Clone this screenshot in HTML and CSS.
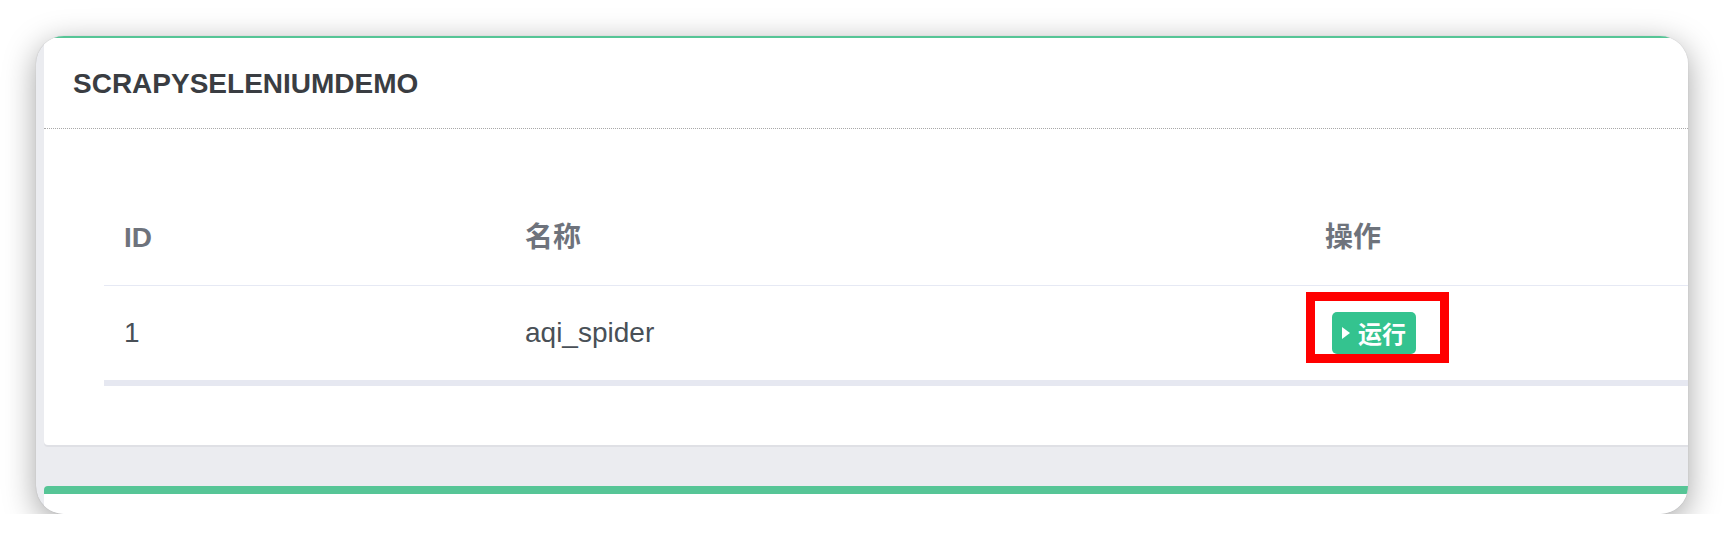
FILE: index.html
```html
<!DOCTYPE html>
<html lang="zh-CN">
<head>
<meta charset="utf-8">
<title>SCRAPYSELENIUMDEMO</title>
<link rel="stylesheet" href="styles.css">
</head>
<body>
<div class="window">
  <div class="topline"></div>
  <section class="card">
    <header class="card-head">
      <h4 class="card-title">SCRAPYSELENIUMDEMO</h4>
    </header>
    <div class="card-body">
      <table class="table">
        <colgroup>
          <col class="c-id">
          <col class="c-name">
          <col>
        </colgroup>
        <thead>
          <tr><th>ID</th><th>名称</th><th>操作</th></tr>
        </thead>
        <tbody>
          <tr>
            <td>1</td>
            <td>aqi_spider</td>
            <td class="ops">
              <span class="btn-run"><svg class="play" width="8" height="12" viewBox="0 0 8 12"><polygon points="0,0 8,6 0,12" fill="#ffffff"/></svg><span class="btn-text">运行</span></span>
              <span class="highlight"></span>
            </td>
          </tr>
        </tbody>
      </table>
    </div>
  </section>
  <section class="card next"></section>
</div>
</body>
</html>
```

FILE: styles.css
```css
* { box-sizing: border-box; }
html, body { margin: 0; background: #ffffff; }
body {
  padding: 36px 0 0 36px;
  font-family: "Liberation Sans", "Noto Sans CJK SC", sans-serif;
}
.window {
  width: 1652px;
  height: 478px;
  border-radius: 28px;
  overflow: hidden;
  background: #ebecf0;
  display: flex;
  flex-direction: column;
  box-shadow: 0 8px 32px rgba(0, 0, 0, 0.36), 0 0 1px rgba(0, 0, 0, 0.25);
}
.topline { flex: none; height: 2px; background: #56c596; }
.card {
  flex: none;
  background: #ffffff;
  margin-left: 8px;
  margin-right: -100px;
  border-radius: 0 0 0 4px;
  box-shadow: 0 2px 0 #dfe0e5;
}
.card-head {
  height: 91px;
  padding: 2px 30px 0 29px;
  display: flex;
  align-items: center;
  border-bottom: 1px dotted #a8a8a8;
}
.card-title {
  margin: 0;
  font-size: 28px;
  font-weight: bold;
  color: #3a3d42;
  line-height: 32px;
}
.card-body { padding: 62px 60px 59px 60px; }
.table {
  width: 100%;
  table-layout: fixed;
  border-collapse: separate;
  border-spacing: 0;
  font-size: 28px;
}
.c-id { width: 401px; }
.c-name { width: 800px; }
.table th {
  text-align: left;
  font-weight: bold;
  color: #6e737c;
  line-height: 32px;
  padding: 31px 20px;
  border-bottom: 1px solid #e6e9f4;
}
.table td {
  text-align: left;
  color: #495057;
  line-height: 32px;
  padding: 26px 20px;
  border-bottom: 6px solid #e6e8f1;
  vertical-align: middle;
}
.table td.ops { position: relative; }
.btn-run {
  display: inline-flex;
  align-items: center;
  gap: 8px;
  height: 42px;
  margin-left: 7px;
  padding: 0 10px;
  background: #34c38f;
  border-radius: 5px;
  color: #ffffff;
  vertical-align: middle;
}
.play { display: block; flex: none; }
.btn-text {
  font-family: "Noto Sans CJK SC", sans-serif;
  font-size: 24px;
  font-weight: 700;
  line-height: 42px;
}
.highlight {
  position: absolute;
  left: 1px;
  top: 6px;
  width: 143px;
  height: 71px;
  border: 9px solid #ff0000;
}
.card.next {
  flex: 1;
  margin-top: 41px;
  border-top: 8px solid #56c596;
  border-radius: 4px 0 0 0;
  box-shadow: none;
}
```
